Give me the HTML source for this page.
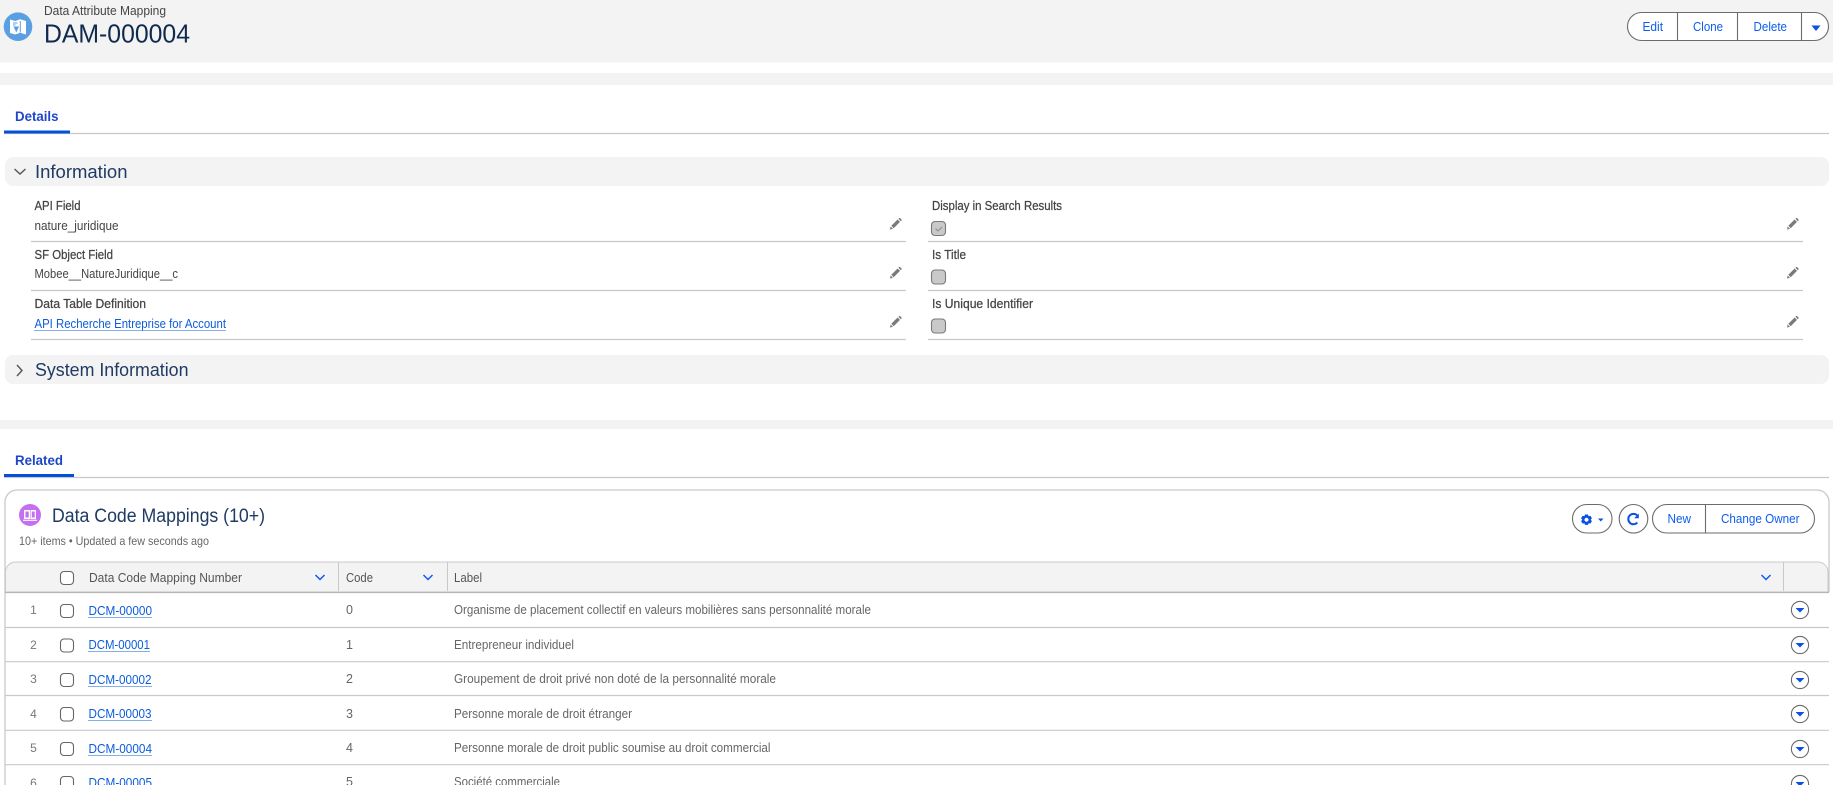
<!DOCTYPE html>
<html lang="en">
<head>
<meta charset="utf-8">
<title>DAM-000004</title>
<style>
html,body{margin:0;padding:0;width:1833px;height:785px;overflow:hidden;background:#fff}
svg{display:block}
text{font-family:"Liberation Sans",Arial,sans-serif;font-size:13px;fill:#444}
.lab{font-size:13px;fill:#444;stroke:#444;stroke-width:.25}
.val{font-size:13px;fill:#444}
.sec{font-size:18px;fill:#1f3a63}
.tab{font-size:13.5px;font-weight:bold;fill:#1f45c8}
.btn{font-size:13px;fill:#0b5cf0}
.lnk{font-size:13px;fill:#0b5cdb}
.th{font-size:12.5px;fill:#555}
.td{font-size:12.5px;fill:#666}
.num{font-size:12px;fill:#777}
.dot{stroke:#0b5cdb;stroke-width:1;stroke-dasharray:1 1;fill:none}
.ln{stroke:#c9c9c9;stroke-width:1.2;fill:none}
.cb{fill:#fff;stroke:#666;stroke-width:1.1}
.cbd{fill:#c9c9c9;stroke:#7a7a7a;stroke-width:1.1}
.out{fill:#fff;stroke:#6b6b6b;stroke-width:1.1}
.chev{fill:none;stroke:#0b5cf0;stroke-width:1.5}
.arrow{fill:#0b50e0}
.pen{fill:#7a7a7a}
</style>
</head>
<body>
<svg width="1833" height="785" viewBox="0 0 1833 785" xmlns="http://www.w3.org/2000/svg">
<defs>
<path id="p" d="M0 11.5l.6-3 2.4 2.4zM1.3 7.8l6.3-6.3 2.4 2.4-6.3 6.3zM8.4.8l.8-.8q.4-.3.8 0l1.6 1.6q.3.4 0 .8l-.8.8z"/>
</defs>

<!-- Page header -->
<path d="M0 0H1833V62.5H0z" fill="#f3f3f3"/>
<path d="M0 73H1833V85H0z" fill="#f3f3f3"/>
<circle cx="18" cy="26.7" r="14.3" fill="#5b9fe3"/>
<path d="M10 19.5l5.2 1.500 5-1.700 5.800 1.700v13.500l-5.800-1.700-5 1.700-5.200-1.500z" fill="#fff"/>
<path d="M20.300 21v11.500" stroke="#5b9fe3" stroke-width="1"/>
<path d="M13 23h4.500M13 25h2.500" stroke="#5b9fe3" stroke-width="1.100" fill="none"/>
<path d="M13.500 26.500h5.500l-2.700 6z" fill="#5b9fe3"/>
<text x="44" y="15" textLength="122" lengthAdjust="spacingAndGlyphs" style="font-size:13px;fill:#444">Data Attribute Mapping</text>
<text x="44" y="42.500" textLength="146" lengthAdjust="spacingAndGlyphs" style="font-size:26px;fill:#0f2a4d">DAM-000004</text>

<rect x="1627.500" y="12.500" width="201" height="28" rx="14" class="out"/>
<path d="M1677.500 12.500v28M1737.500 12.500v28M1801.500 12.500v28" stroke="#6b6b6b" stroke-width="1.100"/>
<text class="btn" x="1642.500" y="31" textLength="20.500" lengthAdjust="spacingAndGlyphs">Edit</text>
<text class="btn" x="1693" y="31" textLength="30" lengthAdjust="spacingAndGlyphs">Clone</text>
<text class="btn" x="1753.500" y="31" textLength="33.500" lengthAdjust="spacingAndGlyphs">Delete</text>
<path class="arrow" d="M1811.500 25.500h9l-4.500 5.500z"/>

<!-- Details tab -->
<path class="ln" d="M4 133.500H1829"/>
<rect x="4" y="130.500" width="66" height="3" fill="#0250d9"/>
<text class="tab" x="15" y="121" textLength="43.500" lengthAdjust="spacingAndGlyphs">Details</text>

<!-- Information section -->
<rect x="5" y="157" width="1824" height="29" rx="8" fill="#f3f3f3"/>
<path d="M14.500 169l5.500 5 5.500-5" fill="none" stroke="#555" stroke-width="1.400"/>
<text class="sec" x="35" y="178" textLength="92.500" lengthAdjust="spacingAndGlyphs">Information</text>

<text class="lab" x="34.500" y="210" textLength="46" lengthAdjust="spacingAndGlyphs">API Field</text>
<text class="val" x="34.500" y="230" textLength="84" lengthAdjust="spacingAndGlyphs">nature_juridique</text>
<path class="ln" d="M31 241.500H906"/>
<text class="lab" x="34.500" y="259" textLength="78.500" lengthAdjust="spacingAndGlyphs">SF Object Field</text>
<text class="val" x="34.500" y="278" textLength="143.500" lengthAdjust="spacingAndGlyphs">Mobee__NatureJuridique__c</text>
<path class="ln" d="M31 290.500H906"/>
<text class="lab" x="34.500" y="308" textLength="111.500" lengthAdjust="spacingAndGlyphs">Data Table Definition</text>
<text class="lnk" x="34.500" y="328" textLength="191.500" lengthAdjust="spacingAndGlyphs">API Recherche Entreprise for Account</text>
<path class="dot" d="M34.500 330.500H226"/>
<path class="ln" d="M31 339.500H906"/>

<use href="#p" x="890" y="218" class="pen"/>
<use href="#p" x="890" y="267" class="pen"/>
<use href="#p" x="890" y="316" class="pen"/>

<text class="lab" x="932" y="210" textLength="130" lengthAdjust="spacingAndGlyphs">Display in Search Results</text>
<rect class="cbd" x="931.500" y="221.500" width="14" height="14" rx="3.500"/>
<path d="M935.500 228.500l2.500 2.500 4-4" fill="none" stroke="#8a8a8a" stroke-width="1"/>
<path class="ln" d="M928 241.500H1803"/>
<text class="lab" x="932" y="259" textLength="34" lengthAdjust="spacingAndGlyphs">Is Title</text>
<rect class="cbd" x="931.500" y="270" width="14" height="14" rx="3.500"/>
<path class="ln" d="M928 290.500H1803"/>
<text class="lab" x="932" y="308" textLength="101" lengthAdjust="spacingAndGlyphs">Is Unique Identifier</text>
<rect class="cbd" x="931.500" y="319" width="14" height="14" rx="3.500"/>
<path class="ln" d="M928 339.500H1803"/>

<use href="#p" x="1787" y="218" class="pen"/>
<use href="#p" x="1787" y="267" class="pen"/>
<use href="#p" x="1787" y="316" class="pen"/>

<!-- System Information -->
<rect x="5" y="355" width="1824" height="29" rx="8" fill="#f3f3f3"/>
<path d="M17 365l5 5.500-5 5.500" fill="none" stroke="#555" stroke-width="1.400"/>
<text class="sec" x="35" y="376" textLength="153.500" lengthAdjust="spacingAndGlyphs">System Information</text>

<rect x="0" y="420" width="1833" height="9" fill="#f3f3f3"/>

<!-- Related tab -->
<path class="ln" d="M4 477.500H1829"/>
<rect x="4" y="474" width="70" height="3" fill="#0250d9"/>
<text class="tab" x="15" y="465" textLength="48" lengthAdjust="spacingAndGlyphs">Related</text>

<!-- Related card -->
<path d="M5 790V502a12 12 0 0 1 12-12H1817a12 12 0 0 1 12 12V592" fill="#fff" stroke="#c9c9c9" stroke-width="1.300"/>
<circle cx="30" cy="515" r="11" fill="#c56ff0"/>
<path d="M24 510h5.300q1 0 1 1v8h-6.300zM36 510h-5.200v9h5.200z" fill="#fff"/>
<path d="M25.500 511.500h3.200v6h-3.200zM31.800 511.500h2.900v6h-2.900z" fill="#c56ff0"/>
<path d="M23 520.300h14" stroke="#fff" stroke-width="1.200"/>
<text x="52" y="522" textLength="213" lengthAdjust="spacingAndGlyphs" style="font-size:19px;fill:#1f3a63">Data Code Mappings (10+)</text>
<text x="19" y="545" textLength="190" lengthAdjust="spacingAndGlyphs" style="font-size:12px;fill:#666">10+ items • Updated a few seconds ago</text>

<rect class="out" x="1572.500" y="504.500" width="39.500" height="28.500" rx="14.200"/>
<path transform="translate(.5 1)" fill="#0b50e0" fill-rule="evenodd" d="M1584.500 513.500h3l.6 1.700 1.800-.4 1.500 2.500-1.200 1.400 1.200 1.400-1.500 2.500-1.800-.4-.6 1.700h-3l-.6-1.700-1.800.4-1.500-2.500 1.200-1.400-1.200-1.400 1.500-2.500 1.800.4zM1586 516.700a2 2 0 1 0 .01 0z"/>
<path class="arrow" d="M1598 518.500h5.500l-2.750 3z"/>
<circle class="out" cx="1633.500" cy="518.800" r="14.300"/>
<path d="M1637.300 522.600a5.200 5.200 0 1 1 -.2 -7.300" fill="none" stroke="#0b50e0" stroke-width="2"/>
<path class="arrow" d="M1634.200 518.300h4.600v-4.800z"/>
<rect class="out" x="1652.500" y="504.500" width="162" height="28.500" rx="14.200"/>
<path d="M1705.500 504.500v28.500" stroke="#6b6b6b" stroke-width="1.100"/>
<text class="btn" x="1667.500" y="523" textLength="23.500" lengthAdjust="spacingAndGlyphs">New</text>
<text class="btn" x="1721" y="523" textLength="78.500" lengthAdjust="spacingAndGlyphs">Change Owner</text>

<!-- Table header -->
<path d="M5.500 592V572a10 10 0 0 1 10-10H1818a10 10 0 0 1 10 10V592z" fill="#f3f3f3" stroke="#c9c9c9" stroke-width="1"/>
<path d="M5 592.500H1829" stroke="#b5b5b5" stroke-width="1.300"/>
<path d="M338.500 562v29M447.500 562v29M1783.500 562v29" stroke="#c9c9c9"/>
<rect class="cb" x="60.500" y="571.500" width="13" height="13" rx="3.500"/>
<text class="th" x="89" y="582" textLength="153" lengthAdjust="spacingAndGlyphs">Data Code Mapping Number</text>
<path class="chev" d="M315.500 575l4.500 4.500 4.500-4.500"/>
<text class="th" x="346" y="582" textLength="27" lengthAdjust="spacingAndGlyphs">Code</text>
<path class="chev" d="M423.500 575l4.500 4.500 4.500-4.500"/>
<text class="th" x="454" y="582" textLength="28" lengthAdjust="spacingAndGlyphs">Label</text>
<path class="chev" d="M1761.500 575l4.500 4.500 4.500-4.500"/>

<!-- Row 1 -->
<text class="num" x="33.500" y="614" text-anchor="middle">1</text>
<rect class="cb" x="60.500" y="604.500" width="13" height="13" rx="3.500"/>
<text class="lnk" x="88.500" y="615" textLength="63.500" lengthAdjust="spacingAndGlyphs">DCM-00000</text>
<path class="dot" d="M88.500 617.500H152"/>
<text class="td" x="346" y="614">0</text>
<text class="td" x="454" y="614" textLength="417" lengthAdjust="spacingAndGlyphs">Organisme de placement collectif en valeurs mobilières sans personnalité morale</text>
<circle class="out" cx="1800" cy="610" r="8.600"/>
<path class="arrow" d="M1795.500 608h9l-4.500 4.500z"/>
<path class="ln" d="M5 627.500H1829"/>

<!-- Row 2 -->
<text class="num" x="33.500" y="649" text-anchor="middle">2</text>
<rect class="cb" x="60.500" y="639" width="13" height="13" rx="3.500"/>
<text class="lnk" x="88.500" y="649" textLength="61.500" lengthAdjust="spacingAndGlyphs">DCM-00001</text>
<path class="dot" d="M88.500 651.500H150"/>
<text class="td" x="346" y="649">1</text>
<text class="td" x="454" y="649" textLength="120" lengthAdjust="spacingAndGlyphs">Entrepreneur individuel</text>
<circle class="out" cx="1800" cy="645" r="8.600"/>
<path class="arrow" d="M1795.500 643h9l-4.500 4.500z"/>
<path class="ln" d="M5 661.700H1829"/>

<!-- Row 3 -->
<text class="num" x="33.500" y="683" text-anchor="middle">3</text>
<rect class="cb" x="60.500" y="673.500" width="13" height="13" rx="3.500"/>
<text class="lnk" x="88.500" y="684" textLength="63" lengthAdjust="spacingAndGlyphs">DCM-00002</text>
<path class="dot" d="M88.500 686.500H151.500"/>
<text class="td" x="346" y="683">2</text>
<text class="td" x="454" y="683" textLength="322" lengthAdjust="spacingAndGlyphs">Groupement de droit privé non doté de la personnalité morale</text>
<circle class="out" cx="1800" cy="680" r="8.600"/>
<path class="arrow" d="M1795.500 678h9l-4.500 4.500z"/>
<path class="ln" d="M5 695.500H1829"/>

<!-- Row 4 -->
<text class="num" x="33.500" y="718" text-anchor="middle">4</text>
<rect class="cb" x="60.500" y="707.500" width="13" height="13.500" rx="3.500"/>
<text class="lnk" x="88.500" y="718" textLength="63" lengthAdjust="spacingAndGlyphs">DCM-00003</text>
<path class="dot" d="M88.500 720.500H151.500"/>
<text class="td" x="346" y="718">3</text>
<text class="td" x="454" y="718" textLength="178" lengthAdjust="spacingAndGlyphs">Personne morale de droit étranger</text>
<circle class="out" cx="1800" cy="714" r="8.600"/>
<path class="arrow" d="M1795.500 712h9l-4.500 4.500z"/>
<path class="ln" d="M5 730.300H1829"/>

<!-- Row 5 -->
<text class="num" x="33.500" y="752" text-anchor="middle">5</text>
<rect class="cb" x="60.500" y="742.500" width="13" height="13" rx="3.500"/>
<text class="lnk" x="88.500" y="753" textLength="63.500" lengthAdjust="spacingAndGlyphs">DCM-00004</text>
<path class="dot" d="M88.500 755.500H152"/>
<text class="td" x="346" y="752">4</text>
<text class="td" x="454" y="752" textLength="316.500" lengthAdjust="spacingAndGlyphs">Personne morale de droit public soumise au droit commercial</text>
<circle class="out" cx="1800" cy="749" r="8.600"/>
<path class="arrow" d="M1795.500 747h9l-4.500 4.500z"/>
<path class="ln" d="M5 764.700H1829"/>

<!-- Row 6 -->
<text class="num" x="33.500" y="787" text-anchor="middle">6</text>
<rect class="cb" x="60.500" y="776.500" width="13" height="13" rx="3.500"/>
<text class="lnk" x="88.500" y="787" textLength="63.500" lengthAdjust="spacingAndGlyphs">DCM-00005</text>
<text class="td" x="346" y="786">5</text>
<text class="td" x="454" y="786" textLength="106" lengthAdjust="spacingAndGlyphs">Société commerciale</text>
<circle class="out" cx="1800" cy="784" r="8.600"/>
<path class="arrow" d="M1795.500 782h9l-4.500 4.500z"/>
</svg>
</body>
</html>
